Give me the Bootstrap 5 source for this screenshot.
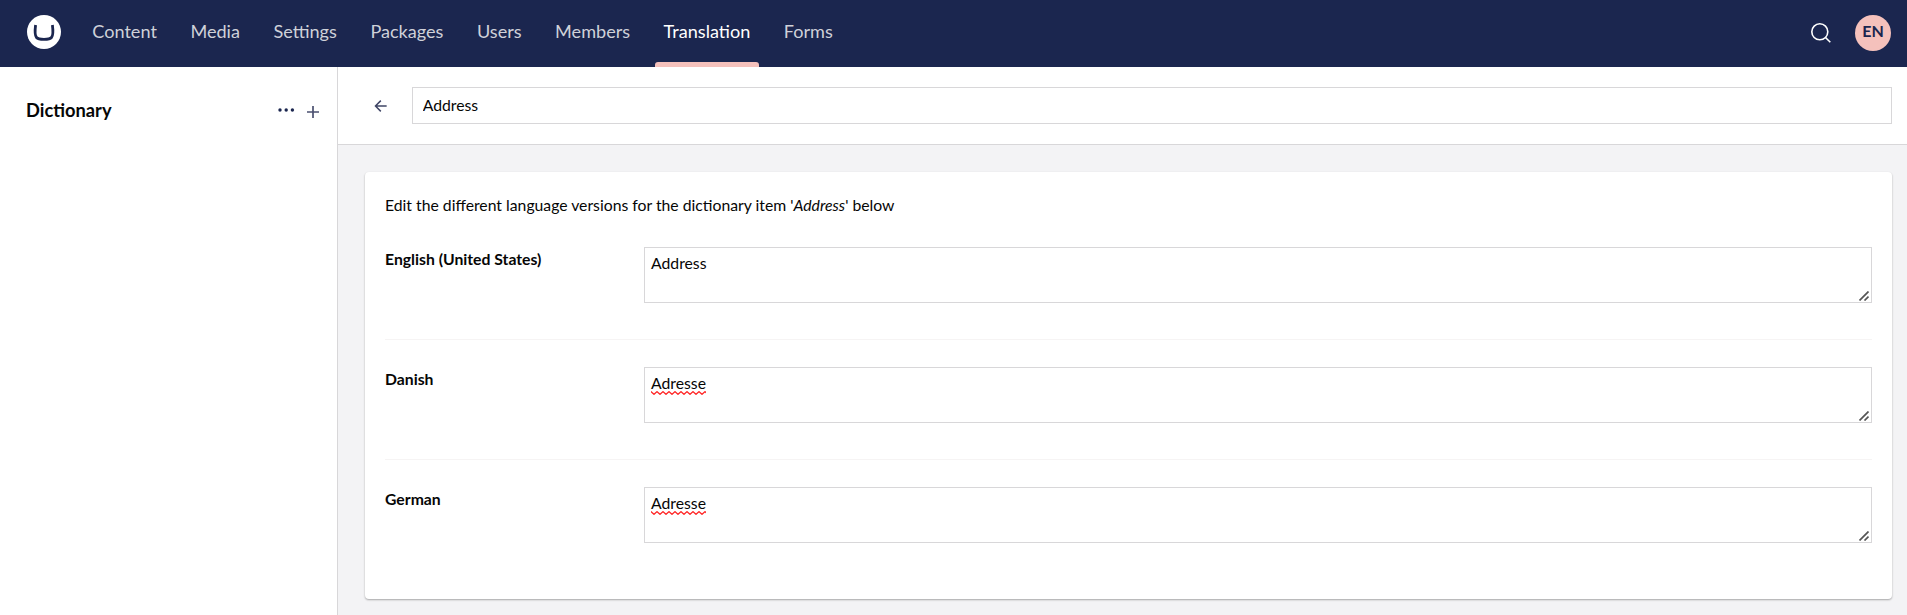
<!DOCTYPE html>
<html lang="en">
<head>
<meta charset="utf-8">
<title>Dictionary</title>
<link href="https://cdn.jsdelivr.net/npm/bootstrap@5.3.0/dist/css/bootstrap.min.css" rel="stylesheet">
<style>
body{font-family:Lato,"Liberation Sans",sans-serif;font-size:15.75px;line-height:20px;color:#060606;background:#f3f3f5;height:100vh;overflow:hidden}
.topbar{height:67px;background:#1b264f;padding:0 16px 0 27px}
.brand-mark{margin-bottom:3px}
.sections{gap:16.500px;margin-left:22.800px;height:67px}
.sections .nav-link{padding:0 8.500px 6px;font-size:18.100px;color:#cfd1d9;height:67px;position:relative;display:flex;align-items:center}
.sections .nav-link.active{color:#fff}
.sections .nav-link.active::after{content:"";position:absolute;left:0;right:0;bottom:0;height:5px;border-radius:3px 3px 0 0;background:#f5c1bc}
.tools{margin-bottom:1px}
.avatar{width:36px;height:36px;background:#f5c1bc;color:#1b264f;font-size:16px;font-weight:700;padding-bottom:4px}
.tree{width:338px;border-right:1px solid #d8d7d9}
.tree-head{padding:32px 17px 0 26px}
.tree-title{font-size:18.300px;line-height:22px;font-weight:700}
.tree-head svg{margin-top:1px}
.editor-head{height:78px;border-bottom:1px solid #d8d7d9;padding:0 15px 1px 36px}
.back-arrow{margin-top:2px}
.field,.field:focus{border:1px solid #d8d7d9;border-radius:0;font-size:15.75px;line-height:20px;color:#060606}
.name-field{height:37px;padding:0 10px 2px;margin-left:24px}
.panel{margin:27px 15px 0 27px;height:427px;border-radius:4px;padding:23px 20px 0 20px;box-shadow:0 1px 2px rgba(0,0,0,.32)}
.entry{height:120px;padding-top:27px;border-top:1px solid #f6f4f4}
.entry:first-of-type{border-color:transparent;margin-top:4px}
.entry-label{width:259px;padding-top:2px;font-weight:700}
.text-area{height:56px;padding:5px 6px;background:#fff url("data:image/svg+xml,%3Csvg xmlns='http://www.w3.org/2000/svg' width='10' height='10'%3E%3Cpath d='M.5 9.500l9-9M5.500 9.500l4-4' stroke='%23555' stroke-width='1.700'/%3E%3C/svg%3E") no-repeat right 2px bottom 1px}
.misspelt{padding-bottom:3px;background:url("data:image/svg+xml,%3Csvg xmlns='http://www.w3.org/2000/svg' width='6' height='4'%3E%3Cpath d='M-1.500 2L0 .7 3 3.300 6 .7 7.500 2' fill='none' stroke='%23f22' stroke-width='1.300'/%3E%3C/svg%3E") repeat-x left bottom}
</style>
</head>
<body class="d-flex flex-column">
<header class="topbar d-flex align-items-center flex-shrink-0">
  <svg class="brand-mark" width="34" height="34" viewBox="0 0 34 34"><circle cx="17" cy="17" r="17" fill="#fff"/><path d="M8.600 10c-.8 6-.7 10.600.9 12.500 1.200 1.400 4 1.800 7.500 1.800s6.300-.4 7.500-1.800c1.600-1.900 1.700-6.500.9-12.500" fill="none" stroke="#1b264f" stroke-width="2.800"/></svg>
  <nav class="nav sections flex-nowrap">
    <a class="nav-link" href="#">Content</a>
    <a class="nav-link" href="#">Media</a>
    <a class="nav-link" href="#">Settings</a>
    <a class="nav-link" href="#">Packages</a>
    <a class="nav-link" href="#">Users</a>
    <a class="nav-link" href="#">Members</a>
    <a class="nav-link active" href="#">Translation</a>
    <a class="nav-link" href="#">Forms</a>
  </nav>
  <div class="tools ms-auto d-flex align-items-center gap-4">
    <svg width="20" height="20" viewBox="0 0 20 20" fill="none" stroke="#fff" stroke-width="1.600"><circle cx="8.800" cy="8.800" r="8"/><path d="M14.500 14.500l4.800 4.800"/></svg>
    <div class="avatar rounded-circle d-flex align-items-center justify-content-center">EN</div>
  </div>
</header>
<div class="d-flex flex-grow-1">
  <aside class="tree bg-white flex-shrink-0">
    <div class="tree-head d-flex align-items-start">
      <div class="tree-title me-auto">Dictionary</div>
      <svg width="18" height="22" viewBox="0 0 18 22" fill="#1b264f" style="margin-right:10px"><circle cx="2" cy="10" r="1.700"/><circle cx="8.200" cy="10" r="1.700"/><circle cx="14.400" cy="10" r="1.700"/></svg>
      <svg width="14" height="24" viewBox="0 0 14 24" fill="none" stroke="#4b5070" stroke-width="1.700"><path d="M1 12h12M7 6v12"/></svg>
    </div>
  </aside>
  <main class="flex-grow-1">
    <div class="editor-head bg-white d-flex align-items-center">
      <svg class="back-arrow" width="14" height="14" viewBox="0 0 14 14" fill="none" stroke="#3f4565" stroke-width="1.500"><path d="M1.500 7H13M7 1.500L1.500 7 7 12.500"/></svg>
      <input class="form-control field name-field" value="Address">
    </div>
    <section class="panel bg-white">
      <p class="m-0">Edit the different language versions for the dictionary item '<em>Address</em>' below</p>
      <div class="entry d-flex"><div class="entry-label flex-shrink-0">English (United States)</div><div class="form-control field text-area">Address</div></div>
      <div class="entry d-flex"><div class="entry-label flex-shrink-0">Danish</div><div class="form-control field text-area"><span class="misspelt">Adresse</span></div></div>
      <div class="entry d-flex"><div class="entry-label flex-shrink-0">German</div><div class="form-control field text-area"><span class="misspelt">Adresse</span></div></div>
    </section>
  </main>
</div>
<script src="https://cdn.jsdelivr.net/npm/bootstrap@5.3.0/dist/js/bootstrap.bundle.min.js"></script>
</body>
</html>
